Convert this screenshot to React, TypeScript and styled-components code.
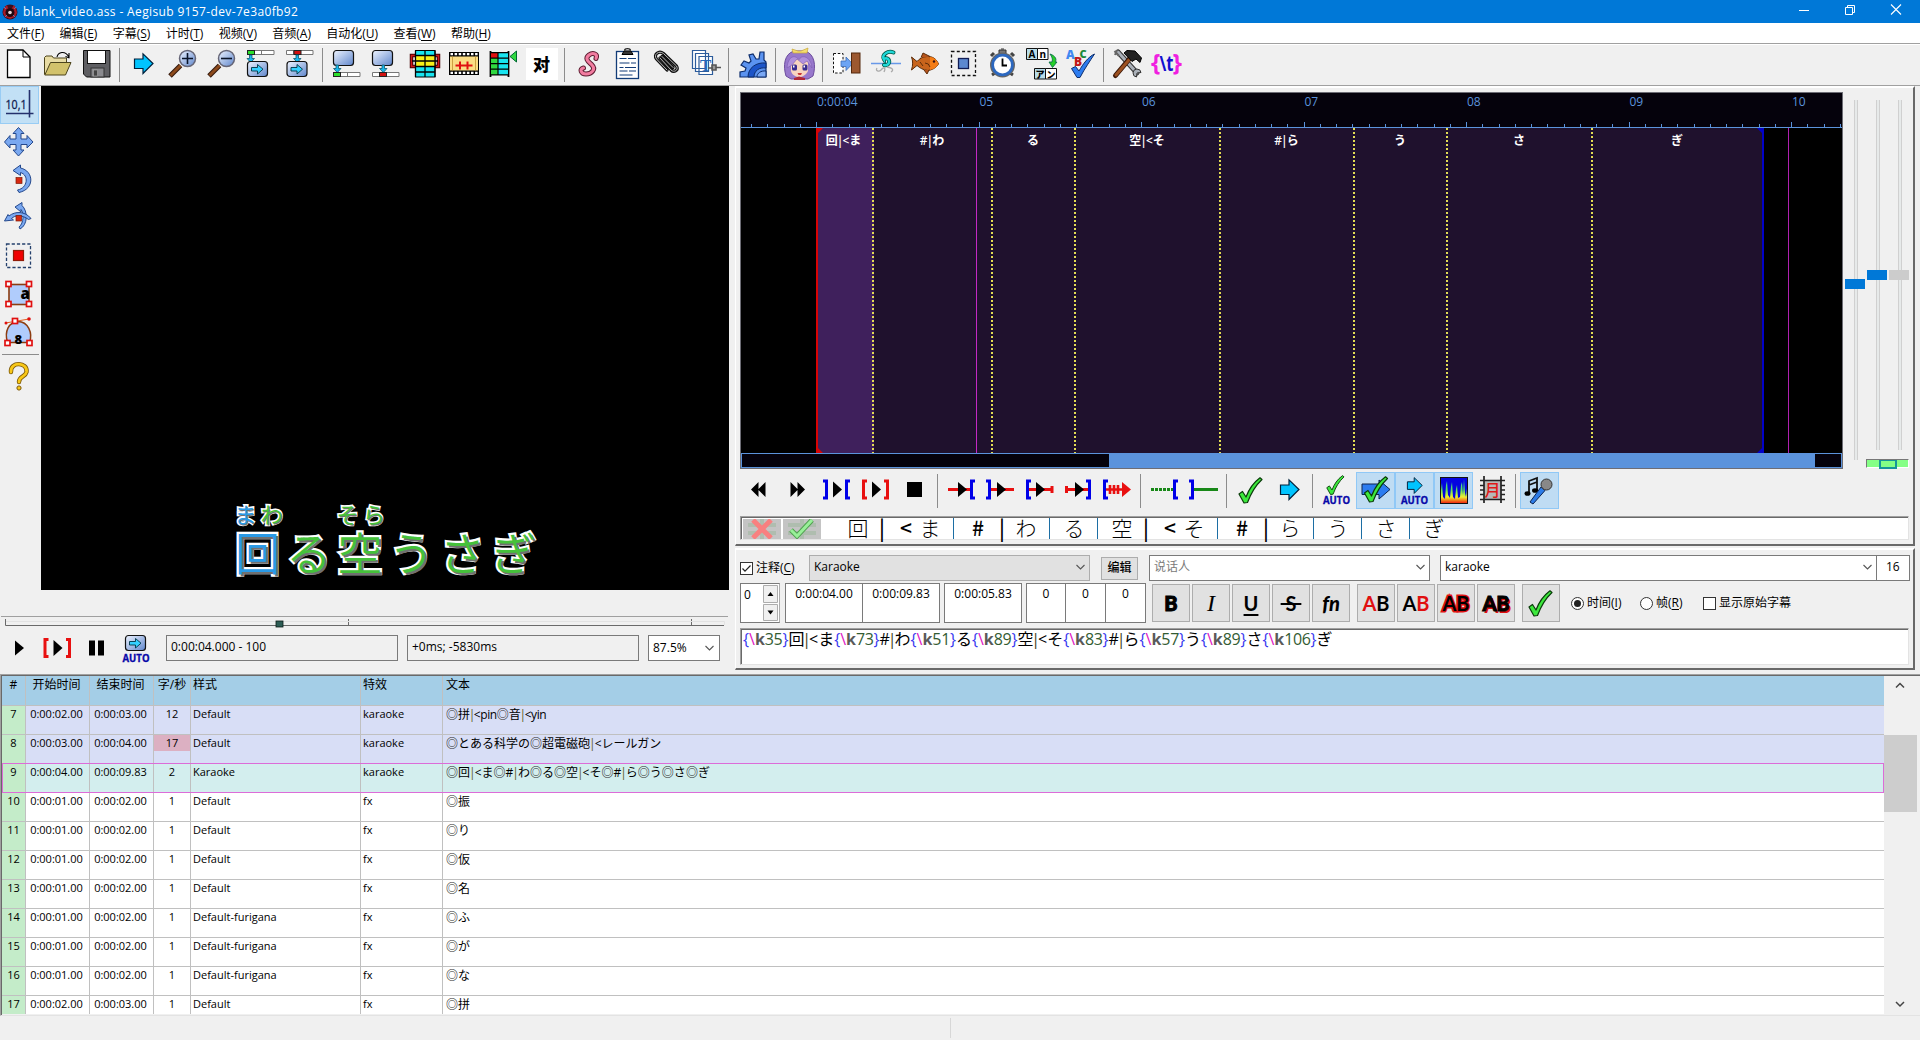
import React from "react";
import styled, { createGlobalStyle, css } from "styled-components";

const UI = `"Open Sans", "Noto Sans CJK SC", sans-serif`;
const JP = `"Open Sans", "Noto Sans CJK JP", sans-serif`;

const Global = createGlobalStyle`
  * { box-sizing: border-box; }
  html, body { margin: 0; padding: 0; background: #f0f0f0; overflow: hidden; }
  body { font: 12px/16px ${UI}; color: #000; }
`;

/* ---------- window chrome ---------- */

const Window = styled.div`
  width: 1920px;
  height: 1040px;
  display: flex;
  flex-direction: column;
  overflow: hidden;
  background: #f0f0f0;
  white-space: pre;
`;

const TitleBar = styled.header`
  height: 23px;
  flex: none;
  display: flex;
  align-items: center;
  background: #0078d7;
  color: #fff;
  padding-left: 2px;
`;

const Title = styled.h1`
  margin: 0 0 0 5px;
  flex: 1;
  font: 400 12px/22px ${UI};
  letter-spacing: 0.36px;
`;

const WindowButtons = styled.div`
  display: flex;
  align-self: flex-start;
  margin: -1px 1px 0 0;
  svg { width: 46px; height: 22px; display: block; }
`;

const MenuBar = styled.nav`
  height: 20px;
  flex: none;
  display: flex;
  align-items: center;
  gap: 15.3px;
  padding-left: 7px;
  background: #fff;
  line-height: 19px;
`;

const Key = styled.span`
  text-decoration: underline;
  text-underline-offset: 2px;
`;

const Toolbar = styled.div`
  height: 43px;
  flex: none;
  display: flex;
  align-items: flex-start;
  border-top: 1px solid #a0a0a0;
  border-bottom: 1px solid #a0a0a0;
  box-shadow: inset 0 1px #fff;
  padding-top: 4px;
`;

const ToolButton = styled.button<{ $on?: boolean; $first?: boolean }>`
  width: 39px;
  height: 37px;
  flex: none;
  margin: 0 0 0 ${(p) => (p.$first ? "-1px" : "0")};
  padding: 0 0 0 3px;
  border: 0;
  background: none;
  display: flex;
  align-items: flex-start;
  svg { width: 33px; height: 32px; display: block; overflow: visible; flex: none; }
  ${(p) => p.$on && css`
    background: #bfdcf3;
    box-shadow: inset 0 0 0 1px #90c8f6;
  `}
`;

const Separator = styled.i`
  width: 8px;
  height: 34px;
  flex: none;
  background: linear-gradient(#8c8c8c, #8c8c8c) 3px 0 / 1px 100% no-repeat;
`;

/* ---------- main areas ---------- */

const Main = styled.main`
  height: 588px;
  flex: none;
  display: flex;
`;

const VideoSide = styled.section`
  width: 735px;
  flex: none;
  display: flex;
  flex-direction: column;
`;

const VideoRow = styled.div`
  height: 504px;
  display: flex;
`;

const VisualTools = styled.div`
  width: 41px;
  flex: none;
  display: flex;
  flex-direction: column;
`;

const VisualButton = styled.button<{ $on?: boolean }>`
  width: 39px;
  height: 38px;
  padding: 1px 0 4px 2px;
  border: 0;
  background: none;
  svg { width: 33px; height: 33px; display: block; overflow: visible; }
  ${(p) => p.$on && css`
    background: #c2e0f5;
    box-shadow: inset 0 0 0 1px #98ccf4;
  `}
`;

const VisualRule = styled.i`
  height: 1px;
  margin: 2px 0 4px 2px;
  width: 37px;
  background: #8c8c8c;
`;

const Video = styled.div`
  width: 688px;
  background: #000;
  display: flex;
  flex-direction: column;
  justify-content: flex-end;
  padding: 0 0 9px 191px;
  font-family: "Noto Sans CJK JP", sans-serif;
`;

const Lyric = styled.div<{ $ruby?: boolean }>`
  display: grid;
  grid-template-columns: repeat(6, 51.2px);
  height: ${(p) => (p.$ruby ? 24 : 56)}px;
  line-height: ${(p) => (p.$ruby ? 24 : 54)}px;
  font-size: ${(p) => (p.$ruby ? 22 : 45)}px;
  font-weight: ${(p) => (p.$ruby ? 400 : 350)};
`;

const Glyph = styled.span<{ $sung?: boolean; $ruby?: boolean }>`
  color: ${(p) => (p.$sung ? "#2a9ae6" : "#45c13a")};
  -webkit-text-stroke: ${(p) => (p.$ruby ? 3.2 : 4.4)}px #fff;
  paint-order: stroke fill;
  text-shadow: 2px 2px 0 #707070;
  text-align: center;
  display: inline-block;
  ${(p) => p.$ruby && css`width: 26.5px; text-shadow: 1px 1px 0 #707070;`}
`;

const RubyPair = styled.span`
  display: flex;
  width: 54px;
`;

const SeekArea = styled.div`
  height: 40px;
  padding: 26px 6px 0 1px;
  svg { display: block; }
`;

const VideoControls = styled.div`
  display: flex;
  align-items: center;
  height: 44px;
  padding: 0 0 8px 4px;
`;

const VideoButton = styled.button<{ $w: number }>`
  width: ${(p) => p.$w}px;
  height: 32px;
  padding: 0;
  border: 0;
  background: none;
  flex: none;
  svg { display: block; width: 32px; height: 32px; overflow: visible; }
`;

const ReadOnly = styled.div<{ $w: number }>`
  width: ${(p) => p.$w}px;
  height: 26px;
  flex: none;
  border: 1px solid #7a7a7a;
  margin-right: 9px;
  padding: 0 4px;
  line-height: 22px;
`;

const Zoom = styled(ReadOnly)`
  background: #fff;
  display: flex;
  justify-content: space-between;
  align-items: center;
  margin: 0;
`;

/* ---------- audio panel ---------- */

const Panels = styled.section`
  width: 1180px;
  display: flex;
  flex-direction: column;
`;

const AudioPanel = styled.div`
  height: 460px;
  border-right: 2px solid #696969;
  border-bottom: 2px solid #696969;
  border-left: 1px solid #fff;
  border-top: 2px solid #fff;
  padding: 4px 3px 0 4px;
  display: flex;
  flex-direction: column;
`;

const DisplayRow = styled.div`
  display: flex;
  height: 377px;
`;

const AudioDisplay = styled.div`
  width: 1103px;
  border: 1px solid #6d6d75;
  background: #000;
  display: flex;
  flex-direction: column;
`;

const Ruler = styled.div`
  height: 35px;
  background: #05020c;
  svg { display: block; }
`;

const Track = styled.div`
  height: 325px;
  display: flex;
  padding-left: 75px;
  position: relative;
`;

const Syllable = styled.div<{ $w: number; $active?: boolean; $last?: boolean }>`
  width: ${(p) => p.$w}px;
  flex: none;
  padding: 6px 3px 0 0;
  text-align: center;
  color: #fff;
  font: 600 12px/14px ${JP};
  background:
    ${(p) => (p.$last
      ? "linear-gradient(#0202c8,#0202c8)"
      : "repeating-linear-gradient(#e2dc54 0 2px, transparent 2px 4px)")}
      right 0 top 0 / 2px 100% no-repeat,
    ${(p) => (p.$active ? "#3f205c" : "#1f112d")};
`;

const Marker = styled.i<{ $x: number; $c: string; $w?: number }>`
  position: absolute;
  top: 0;
  bottom: 0;
  left: ${(p) => p.$x}px;
  width: ${(p) => p.$w ?? 1}px;
  background: ${(p) => p.$c};
`;

const Feet = styled.svg`
  position: absolute;
  top: 0;
  left: 0;
`;

const AudioScroll = styled.div`
  height: 15px;
  border: 1px solid #5b93dc;
  background: #05020c;
  padding: 0 26px 0 367px;
  &::before { content: ""; display: block; height: 100%; background: #5b93dc; }
`;

const Sliders = styled.div`
  display: grid;
  grid-template-columns: repeat(3, 22px);
  padding-left: 2px;
  align-content: start;
  height: 377px;
`;

const Slider = styled.div<{ $h: number; $top: number; $off?: boolean }>`
  height: ${(p) => p.$h}px;
  width: 20px;
  margin-top: 8px;
  background: linear-gradient(90deg, #d0d0d0 1px, #e7eaea 1px 3px, #d0d0d0 3px) 9px 0 / 4px 100% no-repeat;
  padding-top: ${(p) => p.$top}px;
  &::before {
    content: "";
    display: block;
    height: 10px;
    background: ${(p) => (p.$off ? "#cccccc" : "#0078d7")};
  }
`;

const LinkToggle = styled.div`
  grid-column: 2 / 4;
  width: 43px;
  height: 9px;
  margin: -1px 0 0 -1px;
  background: #85ff86;
  border: 1px solid;
  border-color: #777 #fff #fff #777;
  display: flex;
  justify-content: center;
  &::before { content: ""; width: 14px; height: 6px; border: 2px solid #16959b; border-top-width: 1px; }
`;

const AudioToolbar = styled.div`
  display: flex;
  height: 47px;
  padding: 3px 0 0 0;
  margin-left: -1px;
  ${ToolButton} { padding-top: 1px; }
  ${Separator} { margin-top: 2px; }
`;

const KaraokeStrip = styled.div`
  height: 24px;
  width: 1169px;
  display: flex;
  background: #fff;
  border: 1px solid;
  border-color: #a0a0a0 #e3e3e3 #e3e3e3 #a0a0a0;
  box-shadow: inset 1px 1px #696969;
  padding-left: 2px;
  padding-top: 1px;
`;

const StripButton = styled.span`
  width: 38px;
  height: 20px;
  margin-top: 1px;
  margin-right: 2px;
  background: #c4c4c4;
  overflow: hidden;
  svg { display: block; }
`;

const StripSyllable = styled.span<{ $last?: boolean }>`
  display: flex;
  height: 21px;
  padding: 0 ${(p) => (p.$last ? 12 : 11)}px 0 12px;
  border-right: ${(p) => (p.$last ? 0 : 1)}px solid #1c6ea4;
  font: 300 21px/19px "Noto Sans CJK JP", sans-serif;
`;

const StripGap = styled.i`
  width: 11px;
`;

const Ch = styled.b<{ $latin?: boolean }>`
  width: 24px;
  font-weight: ${(p) => (p.$latin ? 500 : "inherit")};
  text-align: center;
  line-height: 18px;
`;

/* ---------- edit panel ---------- */

const EditPanel = styled.div`
  height: 122px;
  margin-top: 2px;
  border-right: 2px solid #696969;
  border-bottom: 2px solid #696969;
  border-left: 1px solid #fff;
  border-top: 2px solid #fff;
  padding: 5px 3px 0 4px;
`;

const EditRow = styled.div<{ $h: number }>`
  height: ${(p) => p.$h}px;
  display: flex;
  align-items: center;
`;

const Check = styled.label<{ $l?: number; $w?: number }>`
  display: flex;
  flex: none;
  width: ${(p) => (p.$w ? `${p.$w}px` : "auto")};
  align-items: center;
  gap: 3px;
  margin-left: ${(p) => p.$l ?? 0}px;
  svg { width: 13px; height: 13px; flex: none; }
`;

const Field = styled.div<{ $w: number; $l?: number; $bg?: string; $mute?: boolean; $pad?: number }>`
  width: ${(p) => p.$w}px;
  height: 26px;
  margin-left: ${(p) => p.$l ?? 0}px;
  flex: none;
  background: ${(p) => p.$bg ?? "#fff"};
  border: 1px solid ${(p) => (p.$bg ? "#adadad" : "#7a7a7a")};
  color: ${(p) => (p.$mute ? "#7a7a7a" : "#000")};
  display: flex;
  justify-content: space-between;
  align-items: center;
  padding: 0 3px 2px ${(p) => p.$pad ?? 4}px;
`;

const Plain = styled.button`
  width: 37px;
  height: 23px;
  margin: 0 0 0 11px;
  padding: 0;
  background: #e1e1e1;
  border: 1px solid #adadad;
  font: 500 12px/20px ${UI};
`;

const TimeBox = styled.div<{ $w: number; $l?: number }>`
  width: ${(p) => p.$w}px;
  margin: 2px 0 0 ${(p) => p.$l ?? -1}px;
  height: 40px;
  flex: none;
  background: #fff;
  border: 1px solid #7a7a7a;
  text-align: center;
  padding-top: 2px;
  align-self: flex-start;
`;

const Spin = styled(TimeBox)`
  display: flex;
  justify-content: space-between;
  padding: 1px 0 1px 3px;
  border-right-color: #adadad;
  line-height: 20px;
  svg { display: block; }
`;

const StyleButton = styled.button<{ $l?: number }>`
  width: 38px;
  height: 38px;
  margin: 0 0 0 ${(p) => p.$l ?? 2}px;
  padding: 0;
  flex: none;
  background: #e1e1e1;
  border: 1px solid #adadad;
  font: 700 20px/33px Lato, sans-serif;
  svg { display: block; width: 36px; height: 36px; }
`;

const Letter = styled.span<{ $c?: string; $glow?: boolean; $deco?: string; $it?: boolean; $fw?: number; $serif?: boolean }>`
  color: ${(p) => p.$c ?? "#000"};
  text-decoration: ${(p) => p.$deco ?? "none"};
  text-decoration-thickness: 2px;
  text-underline-offset: 3px;
  font-style: ${(p) => (p.$it ? "italic" : "normal")};
  font-weight: ${(p) => p.$fw ?? 700};
  ${(p) => p.$serif && css`font-family: "Liberation Serif", serif; font-size: 24px;`}
  ${(p) => p.$glow && css`-webkit-text-stroke: 3px #e01010; paint-order: stroke fill;`}
`;

const Heavy = styled(Letter)`
  -webkit-text-stroke: 1px #000;
`;

const Shadowed = styled(Letter)`
  text-shadow: 2px 2px 0 #e01010;
  -webkit-text-stroke: 1px #000;
`;

const TextArea = styled.div`
  margin-top: 3px;
  width: 1169px;
  height: 37px;
  background: #fff;
  border: 1px solid;
  border-color: #a0a0a0 #e3e3e3 #e3e3e3 #a0a0a0;
  box-shadow: inset 1px 1px #696969;
  padding: 0 0 0 2px;
  font: 16px/21px ${JP};
`;

const Tok = styled.span<{ $k: "brace" | "slash" | "tag" | "num" | "txt" }>`
  color: ${(p) => ({ brace: "#3838f0", slash: "#e014c4", tag: "#5a5a5a", num: "#335c33", txt: "#000" })[p.$k]};
  font-weight: ${(p) => (p.$k === "tag" ? 700 : 400)};
  letter-spacing: ${(p) => (p.$k === "num" ? -0.35 : 0)}px;
`;

const Pipe = styled.span<{ $by: number; $c?: string }>`
  margin: 0 -${(p) => p.$by}px;
  color: ${(p) => p.$c ?? "inherit"};
`;

/* ---------- subtitle grid ---------- */

const GridArea = styled.section`
  height: 342px;
  flex: none;
  display: flex;
  border-top: 1px solid #a0a0a0;
  border-left: 1px solid #a0a0a0;
  border-bottom: 1px solid #e3e3e3;
  box-shadow: inset 1px 1px #696969;
  padding: 1px 3px 1px 1px;
  overflow: hidden;
`;

const Table = styled.div`
  flex: 1;
  background: #fff;
  overflow: hidden;
`;

const Row = styled.div<{ $bg: string; $head?: boolean; $current?: boolean }>`
  display: grid;
  grid-template-columns: 24px 64px 64px 37px 170px 82px 1fr;
  height: 29px;
  background: ${(p) => p.$bg};
  border-bottom: 1px solid #c0c0c0;
  font: 11px/15px "Open Sans", "Noto Sans CJK JP", sans-serif;
  ${(p) => p.$head && css`height: 30px; font: 12px/18px ${UI};`}
  ${(p) => p.$current && css`
    outline: 1px solid #dc6cd8;
    outline-offset: -1px;
    height: 30px;
    margin-top: -1px;
    padding-top: 1px;
    border-bottom-color: #dc6cd8;
    position: relative;
  `}
`;

const Cell = styled.div<{ $center?: boolean; $bg?: string; $time?: boolean }>`
  border-right: 1px solid #c0c0c0;
  padding: 0 ${(p) => (p.$time ? 2 : 0)}px 0 ${(p) => (p.$center ? 0 : 2)}px;
  text-align: ${(p) => (p.$center ? "center" : "left")};
  background: ${(p) => p.$bg ?? "none"};
  overflow: hidden;
  &:last-child { border-right: 0; padding-left: 3px; }
`;

const TextCell = styled(Cell)<{ $tight?: boolean }>`
  font-size: 12px;
  letter-spacing: ${(p) => (p.$tight ? -0.4 : 0)}px;
`;

const Rate = styled.span<{ $hot?: boolean }>`
  display: block;
  height: 16px;
  background: ${(p) => (p.$hot ? "#dcb0c2" : "none")};
`;

const Ring = styled.span`
  color: #2c2c2c;
  letter-spacing: 0;
  font-family: "Noto Sans CJK JP", sans-serif;
  font-weight: 700;
`;

const Scrollbar = styled.div`
  width: 33px;
  flex: none;
  display: flex;
  flex-direction: column;
  background: #f0f0f0;
  svg { display: block; }
`;

const Thumb = styled.i`
  height: 77px;
  background: #cdcdcd;
  margin: 39px 0 auto;
`;

const StatusBar = styled.footer`
  flex: 1;
  background: linear-gradient(#d7d7d7, #d7d7d7) 950px 2px / 1px 20px no-repeat #f0f0f0;
`;

/* ---------- icon pieces ---------- */

const Svg = ({ children, box = "0 0 33 32" }: { children: React.ReactNode; box?: string }) => (
  <svg viewBox={box}>{children}</svg>
);

const Defs = () => (
  <svg width="0" height="0" style={{ position: "absolute" }}>
    <defs>
      <linearGradient id="pane" x1="0" y1="0" x2="1" y2="1">
        <stop offset="0" stopColor="#eef4ff" />
        <stop offset="1" stopColor="#5f86cc" />
      </linearGradient>
      <linearGradient id="spec" x1="0" y1="0" x2="0" y2="1">
        <stop offset="0" stopColor="#38c8c0" />
        <stop offset=".45" stopColor="#58e858" />
        <stop offset=".75" stopColor="#f0f030" />
        <stop offset="1" stopColor="#f02810" />
      </linearGradient>
    </defs>
  </svg>
);

const Tri = ({ x, y = 16, h = 9, w = 9, c = "#000" }: { x: number; y?: number; h?: number; w?: number; c?: string }) => (
  <path d={`M${x} ${y - h}L${x + w} ${y}L${x} ${y + h}Z`} fill={c} />
);
const BrL = ({ x, c = "#0000e8" }: { x: number; c?: string }) => (
  <path d={`M${x + 5} 8H${x + 1.5}V25H${x + 5}`} fill="none" stroke={c} strokeWidth="3" />
);
const BrR = ({ x, c = "#0000e8" }: { x: number; c?: string }) => (
  <path d={`M${x} 8H${x + 3.5}V25H${x}`} fill="none" stroke={c} strokeWidth="3" />
);
const Arrow = ({ x = 7, y = 5, s = 1 }: { x?: number; y?: number; s?: number }) => (
  <path transform={`translate(${x} ${y}) scale(${s})`} d="M.5 6H9V.8L19 10.5L9 20.5V15.500H.5Z" fill="#00c4ff" stroke="#00203c" strokeWidth="1.200" />
);
const Tick = ({ x = 0, y = 0, s = 1 }: { x?: number; y?: number; s?: number }) => (
  <path transform={`translate(${x} ${y}) scale(${s})`} d="M1 17L4.500 14.500L8 20C11 12 15 6 22 .8L24 2.500C17 9 13 16 9.500 25.500L6 26Z" fill="#3ce83c" stroke="#0a3c0a" strokeWidth="1.200" strokeLinejoin="round" />
);
const Auto = ({ x = 3, y = 30 }: { x?: number; y?: number }) => (
  <text x={x} y={y} fontFamily="Open Sans" fontWeight="700" fontSize="10.500" fill="#0808a8" stroke="#0808a8" strokeWidth=".3" textLength="27" lengthAdjust="spacingAndGlyphs">AUTO</text>
);
const Down = ({ x, y }: { x: number; y: number }) => (
  <path d={`M${x - 1} ${y}h2.500v3.500h2.500l-3.700 4l-3.800-4h2.500z`} fill="#18b8ec" stroke="#0c5870" strokeWidth=".8" />
);
const Bar = ({ y, at, c }: { y: number; at: number; c: string }) => (
  <g strokeWidth="1">
    <path d={`M3.500 ${y}H30V${y + 4}H3.500ZM${10.5} ${y}v4M17.500 ${y}v4`} fill="#fff" stroke="#777" />
    <rect x={at} y={y} width="7" height="4" fill={c} stroke="#222" />
  </g>
);
const Pane = ({ x, y, arrow }: { x: number; y: number; arrow?: boolean }) => (
  <g>
    <rect x={x} y={y} width="20" height="15" rx="3" fill="url(#pane)" stroke="#111" strokeWidth="1.200" />
    {arrow && <path d={`M${x + 4} ${y + 6}h6v-3l5.500 4.700l-5.500 4.800v-3h-6z`} fill="#34d0ff" stroke="#034" strokeWidth=".9" />}
  </g>
);
const Lens = ({ plus }: { plus?: boolean }) => (
  <Svg>
    <path d="M4 28L14.500 17.500" stroke="#30160a" strokeWidth="5" />
    <path d="M4.500 27.500L14.500 17.500" stroke="#8c4a1c" strokeWidth="3" />
    <circle cx="21.500" cy="10.500" r="8" fill="url(#pane)" stroke="#667" strokeWidth="1.500" />
    <path d={plus ? "M16 10.500h11M21.500 5v11" : "M16 10.500h11"} stroke="#0a1428" strokeWidth="1.600" />
  </Svg>
);
const Cog = "#5b93f0";

const mainIcons: React.ReactNode[] = [
  <Svg><path d="M5.500 2H21L28 9V29.500H5.500Z" fill="#fff" stroke="#000" strokeWidth="1.300" /><path d="M21 2V9H28" fill="none" stroke="#000" /></Svg>,
  <Svg>
    <path d="M3.500 26.500V9.500L5 8H11L12.500 10H25.500V15" fill="#e8dca4" stroke="#4c441c" />
    <path d="M3.800 27L9.500 14.500H30L24.500 27Z" fill="#d2c26c" stroke="#4c441c" />
    <path d="M16 9C17 4 24 2 28 9M28 9.500V5M28.500 10L24.500 8.500" fill="none" stroke="#000" strokeWidth="1.100" />
  </Svg>,
  <Svg>
    <path d="M3.500 2.500H30V29H6.500L3.500 26Z" fill="#5e5e62" stroke="#111" />
    <rect x="7.500" y="2.500" width="18" height="13" fill="#fff" stroke="#111" />
    <rect x="11" y="20" width="13" height="9" fill="#8a8a8e" stroke="#333" /><rect x="13.500" y="22" width="4" height="6" fill="#444" stroke="#aaa" strokeWidth=".6" />
  </Svg>,
  null,
  <Svg><Arrow /></Svg>,
  <Lens plus />,
  <Lens />,
  <Svg><Bar y={2.5} at={3.5} c="#2ce02c" /><Down x={6.5} y={7} /><Pane x={3.5} y={13.5} arrow /></Svg>,
  <Svg><Bar y={2.5} at={11} c="#d01010" /><Down x={14} y={7} /><Pane x={4} y={13.5} arrow /></Svg>,
  null,
  <Svg><Pane x={3.5} y={2.5} /><Down x={7} y={17} /><Bar y={24.5} at={3.5} c="#2ce02c" /></Svg>,
  <Svg><Pane x={3.5} y={2.5} /><Down x={14} y={17} /><Bar y={24.5} at={10.5} c="#d01010" /></Svg>,
  <Svg>
    <path d="M8 7.500H3.500V18.500H8M26 7.500H30.500V18.500H26" fill="none" stroke="#400" strokeWidth="3.500" /><path d="M8 7.500H3.500V18.500H8M26 7.500H30.500V18.500H26" fill="none" stroke="#d01818" strokeWidth="1.500" />
    <rect x="7.500" y="2.500" width="19.500" height="26.500" fill="#18e4f0" stroke="#000" />
    <rect x="7.500" y="7.500" width="19.500" height="11" fill="#f8f018" />
    <path d="M7.500 7.500h19.500M7.500 13h19.500M7.500 18.500h19.500M7.500 24h19.500M17 2.500V29M4 13h3M27 13h3M7.500 2.500v26.500M27 2.500v26.500" stroke="#000" strokeWidth="1.300" />
  </Svg>,
  <Svg>
    <rect x="2" y="4" width="30" height="23" fill="#000" />
    <rect x="3" y="8.500" width="28" height="14" fill="#fadc84" /><path d="M5.500 8.500v14M28.500 8.500v14" stroke="#c09030" strokeWidth=".8" />
    <path d="M3.500 6.200H32M3.500 24.900H32" stroke="#fff" strokeWidth="2.200" strokeDasharray="2.500 1.600" />
    <path d="M8.500 17.500h17M13 13.500v8M20.500 13.500v8" stroke="#e01010" strokeWidth="2" />
  </Svg>,
  <Svg>
    <path d="M4.500 3V29M22.500 3V29" stroke="#000" strokeWidth="1.800" />
    <rect x="5" y="5" width="7" height="22" fill="#30d840" /><rect x="12" y="5" width="10" height="22" fill="#18e4f0" /><rect x="5" y="5" width="7" height="5" fill="#e01010" />
    <path d="M4.500 4.700h18M4.500 10.200h18M4.500 15.700h18M4.500 21.200h18M4.500 26.800h18M12 5v22" stroke="#000" strokeWidth="1.200" />
    <path d="M30.500 3V14L24 8.500Z" fill="#30d840" stroke="#063" />
  </Svg>,
  <Svg><rect x="1" y="0" width="32" height="32" fill="#fff" /><text x="8" y="22.500" fontFamily="Noto Sans CJK SC" fontWeight="900" fontSize="17">对</text></Svg>,
  null,
  <Svg>
    <path d="M24 10.500C26 6 21 4 17 7C12 11 17 14 20 17C24 21 20 26 14 26C9 26 7 21 11.500 20" fill="none" stroke="#5c1c30" strokeWidth="5" strokeLinecap="round" />
    <path d="M24 10.500C26 6 21 4 17 7C12 11 17 14 20 17C24 21 20 26 14 26C9 26 7 21 11.500 20" fill="none" stroke="#f27ca0" strokeWidth="3" strokeLinecap="round" />
  </Svg>,
  <Svg>
    <rect x="5.500" y="3.500" width="22" height="27" fill="#fff" stroke="#123c78" strokeWidth="1.300" />
    <path d="M11 6.500L13 3H20L22 6.500Z" fill="#333" stroke="#000" /><path d="M13.500 2.500C14 0 19 0 19.500 2.500" stroke="#222" fill="none" strokeWidth="1.300" />
    <path d="M8.500 10.500h7M17 10.500h8M8.500 15h10M20 15h5M8.500 19.500h4M14 19.500h11M8.500 23h8M18 23h7M8.500 27h13" stroke="#123c78" strokeWidth="1.200" />
  </Svg>,
  <Svg>
    <path d="M10 10L21 22C24 25 29 22 26.500 18L13.500 5.500C9 2 3 6.500 6.500 11L17 22M12 8.500L23 19.500" fill="none" stroke="#111" strokeWidth="3.200" strokeLinecap="round" />
    <path d="M10 10L21 22C24 25 29 22 26.500 18L13.500 5.500C9 2 3 6.500 6.500 11L17 22M12 8.500L23 19.500" fill="none" stroke="#bbb" strokeWidth="1" strokeLinecap="round" />
  </Svg>,
  <Svg>
    <path d="M3.500 2.500h13v18h-13zM6.500 5.500h13v18h-13zM10 8.500h13.500v18H10z" fill="#fff" stroke="#2c5c9c" strokeWidth="1.200" />
    <text x="11" y="23" fontFamily="Liberation Serif" fontWeight="700" fontSize="17" fill="#2868b8">T</text>
    <path d="M19 20h5M23 17h4v5h-4zM27 19.500h5" stroke="#555" strokeWidth="1.600" fill="#999" />
  </Svg>,
  null,
  <Svg>
    <path d="M4 29V24L9 23L10 20L5 17L8 13L13 15L15 13L13 7L17 6L20 11L23 11L24 4L28 4L28 12L30 14V29Z" fill={Cog} stroke="#0c2c6c" strokeWidth="1.200" />
    <path d="M12 29C12 20 20 14 30 15V20C23 19 18 23 18 29Z" fill="#1c54c8" stroke="#0c2c6c" /><path d="M21 29C21 25 25 22.500 30 23V29Z" fill="#7aa8f4" stroke="#0c2c6c" />
  </Svg>,
  null,
  <Svg>
    <path d="M3 28C0 18 1 6 11 3H22C32 6 33 18 30 28L25 31H8Z" fill="#9878cc" stroke="#6c4c9c" />
    <path d="M8 14C10 10 24 10 25 14V23C23 27 19 29 16.500 29C13 29 9 27 8 23Z" fill="#f8d4c0" />
    <path d="M4 20C5 8 12 6 16 12C18 6 28 8 29 20L24 13L20 16L14 11L9 17Z" fill="#b090dc" stroke="#7c5cb0" strokeWidth=".6" />
    <rect x="9" y="16.500" width="5" height="6" rx="1.500" fill="#382c90" /><rect x="19.500" y="16.500" width="5" height="6" rx="1.500" fill="#382c90" />
    <path d="M10 17.500h1.500v2h-1.500zM20.500 17.500h1.500v2h-1.500z" fill="#fff" />
    <path d="M14.500 25h4.500l-1 2h-2.500z" fill="#c83838" /><path d="M11 30L16 28.500L22 30V32H11Z" fill="#b02838" />
    <path d="M9 1L15 3L18 3L25 0L24 5L17 5L10 5Z" fill="#f4dc70" stroke="#c8a838" strokeWidth=".7" />
  </Svg>,
  null,
  <Svg>
    <rect x="3.500" y="5.500" width="9.500" height="19.500" fill="#fff" stroke="#111" strokeDasharray="2.500 1.800" />
    <path d="M11 13h5v-4l6.500 6.800L16 22.500v-4h-5z" fill="#6ca4f4" stroke="#3c6cb8" strokeWidth=".8" />
    <rect x="21.500" y="5" width="8.500" height="20" fill="#9c5830" stroke="#54280c" />
  </Svg>,
  <Svg>
    <path d="M2 15.500H32" stroke="#6898e8" strokeWidth="1.500" />
    <path d="M15 17C18 18 21 15.500 20 12.500C19 9.500 15 10 15 11.500C12 7 19 2 24.500 4.500" fill="none" stroke="#054" strokeWidth="4" strokeLinecap="round" />
    <path d="M15 17C18 18 21 15.500 20 12.500C19 9.500 15 10 15 11.500C12 7 19 2 24.500 4.500" fill="none" stroke="#20d8d8" strokeWidth="2.400" strokeLinecap="round" />
    <path d="M8 20C6 23 10 24 12 22C15 18 17 20 15 24M18 19C24 20 25 22 22 24" fill="none" stroke="#aaa" strokeWidth="1.300" />
  </Svg>,
  <Svg>
    <path d="M3.500 9L9 13.500C13 9 17 8.500 21 8.500C26 9 29 12 30.500 16C28 20 24 22 20 22.500C15 22 12 20 9 17.500L3.500 22C5 17 5 13 3.500 9Z" fill="#c8641c" stroke="#5c2c08" />
    <path d="M13 9.500L15 5L22 8.500M16 22L19 26L21 22" fill="#b8541c" stroke="#5c2c08" /><path d="M22 9C26 9 29 12 30.500 16C28 20 25 21 22 22Z" fill="#f47c14" />
    <circle cx="26" cy="13.500" r="1.200" fill="#311" /><path d="M17 15q4 0 5 4M12 14l3 4" stroke="#5c2c08" fill="none" />
  </Svg>,
  <Svg><rect x="4.500" y="3.500" width="24" height="24" fill="none" stroke="#111" strokeWidth="1.300" strokeDasharray="3 2.300" /><rect x="11.500" y="10.500" width="10" height="10" fill="#5c88d0" stroke="#111c54" strokeWidth="1.300" /></Svg>,
  <Svg>
    <path d="M13 2h7v4h-7zM15 1h3" fill="#777" stroke="#333" /><path d="M5 8l3-3M28 8l-3-3M6 27l3-2M27 27l-3-2" stroke="#444" strokeWidth="3" />
    <circle cx="16.500" cy="17" r="12.500" fill="#666" /><circle cx="16.500" cy="17" r="11.200" fill="#2c68c0" /><circle cx="16.500" cy="17" r="8.500" fill="#fff" /><path d="M16.500 10.500V17.500H21" fill="none" stroke="#000" strokeWidth="1.800" />
  </Svg>,
  <Svg>
    <path d="M1.500.500h11v11h-11zM9.500 20.500h11v10.500h-11z" fill="#b8dce8" stroke="#111" /><path d="M12.500.500h10.500v11h-10.500zM20.500 20.500H31.500v10.500h-11z" fill="#fff" stroke="#111" />
    <g fontFamily="Open Sans" fontWeight="700" fontSize="10"><text x="3.500" y="10">A</text><text x="14.500" y="10">n</text></g>
    <g fontFamily="Noto Sans CJK JP" fontWeight="900" fontSize="9"><text x="10.500" y="29.500">ア</text><text x="21.500" y="29.500">ン</text></g>
    <path d="M25 6C31 8 32 12 30 14H32L27.500 19.500L24 14H27C28 11 27 9 25 6Z" fill="#28d028" stroke="#064" strokeWidth=".8" />
  </Svg>,
  <Svg>
    <g fontFamily="Open Sans" fontWeight="800"><text x="2" y="10.500" fontSize="12" fill="#4088f0">A</text><text x="10" y="17.500" fontSize="12" fill="#c01818">B</text><text x="15.500" y="9.500" fontSize="11" fill="#188838">C</text></g>
    <path d="M7.500 20.500L11.500 18.500L15 23C19 16 24 9 30.500 6C26 13 21 20 16 29.500H13Z" fill="#2c7cf0" stroke="#0c2c6c" />
  </Svg>,
  null,
  <Svg>
    <path d="M7 4L26 25" stroke="#333" strokeWidth="5" strokeLinecap="round" /><path d="M7 4L26 25" stroke="#aab0b8" strokeWidth="3" strokeLinecap="round" />
    <path d="M25.500 29A4 4 0 1 1 30 24.500L26 25Z" fill="#aab0b8" stroke="#333" /><path d="M3.500 3L8 8M6 2L4 7" stroke="#666" strokeWidth="2" />
    <path d="M4.500 27.500L20 9" stroke="#3c1808" strokeWidth="5" strokeLinecap="round" /><path d="M5 27L20 9.500" stroke="#9c5020" strokeWidth="3" strokeLinecap="round" />
    <path d="M13 5L16 2.500L24 3L30.500 10L29 14.500L25 11L21 13.500Z" fill="#222" stroke="#000" />
  </Svg>,
  <Svg>
    <g fontFamily="Open Sans" fontSize="24"><text x="1" y="23" fill="#f020e0" fontWeight="700">{"{"}</text><text x="9.500" y="22.500" fontSize="21" fill="#1010d0" fontWeight="700" textLength="14" lengthAdjust="spacingAndGlyphs">{"\\t"}</text><text x="22.500" y="23" fill="#f020e0" fontWeight="700">{"}"}</text></g>
  </Svg>,
];

const Node = ({ x, y }: { x: number; y: number }) => <rect x={x - 2.5} y={y - 2.5} width="5" height="5" fill="#fff" stroke="#e01010" strokeWidth="1.700" />;
const Frame = ({ children }: { children: React.ReactNode }) => <Svg box="0 0 33 33">{children}</Svg>;
const blue = { fill: "#7aa8f0", stroke: "#24488c", strokeWidth: 1 };

const visualIcons = [
  <Frame>
    <path d="M4 26.500H31.500M27.500 3V30.500" stroke="#24306c" strokeWidth="1.600" fill="none" />
    <text x="3.500" y="22" fontFamily="Open Sans" fontSize="12.500" fill="#101c50" stroke="#101c50" strokeWidth=".3" textLength="21" lengthAdjust="spacingAndGlyphs">10,1</text>
  </Frame>,
  <Frame><path {...blue} d="M16.500 2.500L22 8.500H19V14H25V10.500L31 17L25 23V19.500H19V25H22L16.500 31L11 25H14V19.500H8V23L2.500 17L8 10.500V14H14V8.500H11Z" /></Frame>,
  <Frame>
    <path {...blue} d="M11 7.500L18.500 2V5C32 8 33 26 17 29.500L15.500 27C26 25 27 12 18.500 9.500V12.500Z" />
    <rect x="14" y="14.500" width="6" height="6" fill="#d82810" stroke="#7c1c08" strokeWidth=".7" />
  </Frame>,
  <Frame>
    <path {...blue} d="M13 6L20 1.500V4.500C26 10 26 24 18 28L17 26C22 22 22 12 19 8.500V11Z" />
    <path {...blue} d="M2.500 20L6 13.500L7 15C13 10 23 10 29 17.500L26.500 18.500C20 13.500 13 14 9.500 17.500L11.500 19Z" />
    <rect x="14" y="14.500" width="5.500" height="5.500" fill="#d82810" stroke="#7c1c08" strokeWidth=".7" />
  </Frame>,
  <Frame><rect x="4.500" y="5" width="24" height="23.500" fill="none" stroke="#24406c" strokeWidth="1.300" strokeDasharray="3.200 2" /><rect x="11.500" y="11.500" width="10" height="10" fill="#f00000" stroke="#901c08" strokeWidth="1.200" /></Frame>,
  <Frame>
    <rect x="7" y="7.500" width="20" height="20" fill="#b0ccfc" stroke="#8c3c10" strokeWidth="1.600" /><text x="18.500" y="22" fontFamily="Open Sans" fontWeight="800" fontSize="15">a</text>
    <Node x={6.5} y={7} /><Node x={27} y={7} /><Node x={6.5} y={27} /><Node x={27} y={27} />
  </Frame>,
  <Frame>
    <path d="M5.500 27.500C2 16 7 7 16 6.500C26 6.500 31 18 27.500 27.500Z" fill="#b0ccfc" stroke="#8c3c10" strokeWidth="1.500" /><text x="12.500" y="28.500" fontFamily="Open Sans" fontWeight="800" fontSize="13">8</text>
    <path d="M3.500 8L27 4" stroke="#e06020" /><circle cx="4" cy="8" r="1.500" fill="#e01010" /><circle cx="27" cy="4" r="1.800" fill="#e01010" />
    <Node x={13} y={6} /><Node x={5.5} y={28} /><Node x={27.5} y={28} />
  </Frame>,
  null,
  <Frame>
    <path d="M9 12C8 1 26 2 24.500 12C23.500 17 17 16 17 22" fill="none" stroke="#7c5808" strokeWidth="4.400" strokeLinecap="round" /><path d="M9 12C8 1 26 2 24.500 12C23.500 17 17 16 17 22" fill="none" stroke="#f8c818" strokeWidth="2.800" strokeLinecap="round" />
    <circle cx="17" cy="28" r="2.100" fill="#f8c818" stroke="#7c5808" />
  </Frame>,
];

const red = "#e81010";
const audioIcons: (React.ReactNode | null)[] = [
  <Svg><path d="M9 16.500L16.500 9V24ZM16 16.500L23.500 9V24Z" /></Svg>,
  <Svg><path d="M9.500 9L17 16.500L9.500 24ZM16.500 9L24 16.500L16.500 24Z" /></Svg>,
  <Svg><BrR x={3} /><Tri x={13} y={16.5} h={8} /><BrL x={25} /></Svg>,
  <Svg><BrL x={3} c={red} /><Tri x={13} y={16.5} h={8} /><BrR x={25} c={red} /></Svg>,
  <Svg><rect x="9" y="9" width="15" height="15" /></Svg>,
  null,
  <Svg><path d="M3 16.500H25" stroke={red} strokeWidth="3" /><Tri x={13} y={16.5} h={7.5} /><BrL x={25} /></Svg>,
  <Svg><path d="M7 16.500H30" stroke={red} strokeWidth="3" /><Tri x={13} y={16.5} h={7.5} /><BrR x={2} /></Svg>,
  <Svg><path d="M5 16.500H29M29 13V20" stroke={red} strokeWidth="3" /><Tri x={13} y={16.5} h={7.5} /><BrL x={3} /></Svg>,
  <Svg><path d="M5 16.500H26M4.500 13V20" stroke={red} strokeWidth="3" /><Tri x={13} y={16.5} h={7.5} /><BrR x={24} /></Svg>,
  <Svg><path d="M5 16.500H22M9 12V21M13 12V21M17 12V21" stroke={red} strokeWidth="2.600" /><Tri x={21} y={16.5} h={7.5} c={red} /><BrL x={2} /></Svg>,
  null,
  <Svg><path d="M3 16.500H25" stroke="#188818" strokeWidth="3" strokeDasharray="3 1" /><BrL x={25} /></Svg>,
  <Svg><path d="M7 16.500H31" stroke="#188818" strokeWidth="3" /><BrR x={2} /></Svg>,
  null,
  <Svg><Tick x={4} y={4} /></Svg>,
  <Svg><Arrow y={6} /></Svg>,
  null,
  <Svg><Tick x={6} y={2} s={0.75} /><Auto y={31} /></Svg>,
  <Svg><path d="M3 11H20V7L31 16.500L20 26V21.500H3Z" fill="#2c7cf0" stroke="#0c2450" /><Tick x={4.5} y={3} /></Svg>,
  <Svg><Arrow x={9} y={4} s={0.8} /><Auto y={31} /></Svg>,
  <Svg>
    <rect x="3.500" y="4.500" width="27" height="26" fill="#0404e0" stroke="#111" />
    <path d="M4 30V17L5 10L6 24L8 26L9 12L10 8L11 22L13 25L14 14L15 9L16 24L18 26L19 16L20 12L21 25L23 24L24 12L25 9L26 22L27 6L28 20L29 24L30 15V30Z" fill="url(#spec)" />
  </Svg>,
  <Svg>
    <rect x="8" y="7" width="17" height="20" fill="#b8b8b8" /><path d="M4 7.500H29M4 12.500H8M25 12.500H29M4 17H8M25 17H29M4 21.500H8M25 21.500H29M4 26.500H29M8 3V30M25 3V30" stroke="#222" strokeWidth="1.700" />
    <text x="8.500" y="22.500" fontFamily="Noto Sans CJK SC" fontSize="16" fontWeight="500" fill="#e01818">月</text>
  </Svg>,
  null,
  <Svg>
    <path d="M6 20V8L14 5V17M6 12L14 9" stroke="#111" fill="none" strokeWidth="1.800" /><ellipse cx="4.500" cy="20.500" rx="3" ry="2.300" /><ellipse cx="12" cy="17.500" rx="3" ry="2.300" />
    <path d="M7 29L18 14L22 17.500L10 31Z" fill="#2c7ce8" stroke="#0c2450" /><circle cx="23.500" cy="11.500" r="5.500" fill="#888" stroke="#333" />
  </Svg>,
];
const audioOn = new Set([19, 20, 21, 24]);

const Chevron = () => (
  <svg width="11" height="8" viewBox="0 0 11 8"><path d="M1.500 2L5.500 6L9.500 2" fill="none" stroke="#555" strokeWidth="1.100" /></svg>
);
const Box = ({ on }: { on?: boolean }) => (
  <svg viewBox="0 0 13 13"><rect x=".5" y=".5" width="12" height="12" fill="#fff" stroke="#333" />{on && <path d="M2.500 6.500L5 9.200L10.500 3.500" fill="none" stroke="#222" strokeWidth="1.200" />}</svg>
);
const Radio = ({ on }: { on?: boolean }) => (
  <svg viewBox="0 0 13 13"><circle cx="6.500" cy="6.500" r="6" fill="#fff" stroke="#333" />{on && <circle cx="6.500" cy="6.500" r="3.500" fill="#222" />}</svg>
);

/* ---------- data ---------- */

const menus: [string, string][] = [
  ["文件", "F"], ["编辑", "E"], ["字幕", "S"], ["计时", "T"], ["视频", "V"], ["音频", "A"], ["自动化", "U"], ["查看", "W"], ["帮助", "H"],
];

const syllables = [
  { t: "回|<ま", k: 35, w: 58 },
  { t: "#|わ", k: 73, w: 119 },
  { t: "る", k: 51, w: 83 },
  { t: "空|<そ", k: 89, w: 145 },
  { t: "#|ら", k: 83, w: 134 },
  { t: "う", k: 57, w: 93 },
  { t: "さ", k: 89, w: 145 },
  { t: "ぎ", k: 106, w: 171 },
];

type Line = [number, string, string, number, string, string, string];
const lines: Line[] = [
  [7, "0:00:02.00", "0:00:03.00", 12, "Default", "karaoke", "@拼|<pin@音|<yin"],
  [8, "0:00:03.00", "0:00:04.00", 17, "Default", "karaoke", "@とある科学の@超電磁砲|<レールガン"],
  [9, "0:00:04.00", "0:00:09.83", 2, "Karaoke", "karaoke", "@回|<ま@#|わ@る@空|<そ@#|ら@う@さ@ぎ"],
  [10, "0:00:01.00", "0:00:02.00", 1, "Default", "fx", "@振"],
  [11, "0:00:01.00", "0:00:02.00", 1, "Default", "fx", "@り"],
  [12, "0:00:01.00", "0:00:02.00", 1, "Default", "fx", "@仮"],
  [13, "0:00:01.00", "0:00:02.00", 1, "Default", "fx", "@名"],
  [14, "0:00:01.00", "0:00:02.00", 1, "Default-furigana", "fx", "@ふ"],
  [15, "0:00:01.00", "0:00:02.00", 1, "Default-furigana", "fx", "@が"],
  [16, "0:00:01.00", "0:00:02.00", 1, "Default-furigana", "fx", "@な"],
  [17, "0:00:02.00", "0:00:03.00", 1, "Default", "fx", "@拼"],
];

const Piped = ({ text, by, c }: { text: string; by: number; c?: string }) => (
  <>{text.split("|").map((part, i) => (
    <React.Fragment key={i}>{i > 0 && <Pipe $by={by} $c={c}>|</Pipe>}{part}</React.Fragment>
  ))}</>
);

const GridText = ({ text }: { text: string }) => (
  <>{text.split("@").map((part, i) => (
    <React.Fragment key={i}>{i > 0 && <Ring>◎</Ring>}<Piped text={part} by={1} c="#5c5c28" /></React.Fragment>
  ))}</>
);

const ticks = Array.from({ length: 68 }, (_, i) => ({ x: Math.round(76 - 65 + i * 16.25) - 0.5, major: i >= 4 && (i - 4) % 10 === 0 }));
const seconds = ["0:00:04", "05", "06", "07", "08", "09", "10"];

const timeFields: [number, number, string][] = [
  [78, 5, "0:00:04.00"], [78, -1, "0:00:09.83"], [78, 4, "0:00:05.83"], [40, 4, "0"], [41, -1, "0"], [41, -1, "0"],
];

/* ---------- page ---------- */

export default function App() {
  return (
    <Window>
      <Global />
      <Defs />
      <TitleBar>
        <svg width="16" height="16" viewBox="0 0 16 16">
          <circle cx="8" cy="8" r="7.500" fill="#3a1020" /><path d="M2 4L5 1L6 4L10 4L12 1L14 4L15 9L13 13L8 15L3 13L1 9Z" fill="#a81c28" />
          <circle cx="8" cy="8.500" r="4.500" fill="#200810" /><circle cx="8" cy="8.500" r="1.800" fill="#e8d8d8" /><path d="M2 3L4 5M12 5L14 3M3 13L5 11M13 13L11 11" stroke="#5878b8" />
        </svg>
        <Title>blank_video.ass - Aegisub 9157-dev-7e3a0fb92</Title>
        <WindowButtons>
          <svg viewBox="0 0 46 22"><path d="M18 11.500H28" stroke="#fff" /></svg>
          <svg viewBox="0 0 46 22"><path d="M18.500 8.500h7v7h-7zM20.500 8V6.500h7v7H26" fill="none" stroke="#fff" /></svg>
          <svg viewBox="0 0 46 22"><path d="M18 5.500L28 15.500M28 5.500L18 15.500" stroke="#fff" strokeWidth="1.100" /></svg>
        </WindowButtons>
      </TitleBar>
      <MenuBar>
        {menus.map(([m, k]) => <span key={k}>{m}(<Key>{k}</Key>)</span>)}
      </MenuBar>
      <Toolbar>
        {mainIcons.map((icon, i) => (icon ? <ToolButton key={i} $first={i === 0}>{icon}</ToolButton> : <Separator key={i} />))}
      </Toolbar>

      <Main>
        <VideoSide>
          <VideoRow>
            <VisualTools>
              {visualIcons.map((icon, i) => (icon ? <VisualButton key={i} $on={i === 0}>{icon}</VisualButton> : <VisualRule key={i} />))}
            </VisualTools>
            <Video>
              <Lyric $ruby>
                <RubyPair><Glyph $ruby $sung>ま</Glyph><Glyph $ruby>わ</Glyph></RubyPair>
                <span />
                <RubyPair><Glyph $ruby>そ</Glyph><Glyph $ruby>ら</Glyph></RubyPair>
              </Lyric>
              <Lyric>
                {Array.from("回る空うさぎ").map((c, i) => <Glyph key={c} $sung={i === 0}>{c}</Glyph>)}
              </Lyric>
            </Video>
          </VideoRow>
          <SeekArea>
            <svg width="728" height="14" viewBox="0 0 728 14">
              <path d="M0 .5H727" stroke="#a0a0a0" /><path d="M4.500 3V9.500H723M347.500 3V9M690.500 3V9" fill="none" stroke="#6a6a6a" /><path d="M5 5.500H723.500V9" fill="none" stroke="#e2e2e2" />
              <rect x="275" y="5" width="7" height="6" fill="#2c5c54" stroke="#0c1c18" strokeWidth=".8" />
            </svg>
          </SeekArea>
          <VideoControls>
            <VideoButton $w={39}><svg viewBox="0 0 32 32"><Tri x={11} h={7.5} /></svg></VideoButton>
            <VideoButton $w={39}><svg viewBox="0 0 32 32"><g transform="translate(-3 -.5)"><BrL x={3.5} c={red} /><Tri x={13.5} y={16.5} h={8} /><BrR x={26} c={red} /></g></svg></VideoButton>
            <VideoButton $w={39}><svg viewBox="0 0 32 32"><path d="M7 8.500h6v15H7zM16 8.500h6v15h-6z" /></svg></VideoButton>
            <VideoButton $w={45}><svg viewBox="0 0 32 32"><g transform="translate(0 1)"><Pane x={4.5} y={2.5} arrow /><Auto x={1.5} y={29} /></g></svg></VideoButton>
            <ReadOnly $w={232}>0:00:04.000 - 100</ReadOnly>
            <ReadOnly $w={232}>+0ms; -5830ms</ReadOnly>
            <Zoom $w={72}>87.5%<Chevron /></Zoom>
          </VideoControls>
        </VideoSide>

        <Panels>
          <AudioPanel>
            <DisplayRow>
              <AudioDisplay>
                <Ruler>
                  <svg width="1101" height="35" viewBox="0 0 1101 35">
                    <path d={ticks.map((t) => `M${t.x} ${t.major ? 29 : 31}V35`).join("") + "M0 34.500H1101"} stroke="#5b93dc" />
                    {seconds.map((s, i) => <text key={s} x={76 + i * 162.5} y="13" fontFamily="Open Sans" fontSize="12" fill="#5b93dc">{s}</text>)}
                  </svg>
                </Ruler>
                <Track>
                  {syllables.map((s, i) => (
                    <Syllable key={i} $w={s.w} $active={i === 0} $last={i === syllables.length - 1}><Piped text={s.t} by={1} /></Syllable>
                  ))}
                  <Marker $x={75} $w={2} $c="#d80404" />
                  <Marker $x={235} $c="#c428c4" />
                  <Marker $x={1047} $c="#b020b0" />
                  <Feet width="1101" height="325"><path d="M76 0h6l-6 6zM76 325h6l-6 -6z" fill="#d80404" /><path d="M1022 0h-6l6 6zM1022 325h-6l6 -6z" fill="#0202c8" /></Feet>
                </Track>
                <AudioScroll />
              </AudioDisplay>
              <Sliders>
                <Slider $h={360} $top={179} />
                <Slider $h={350} $top={170} />
                <Slider $h={350} $top={170} $off />
                <LinkToggle />
              </Sliders>
            </DisplayRow>
            <AudioToolbar>
              {audioIcons.map((icon, i) => (icon ? <ToolButton key={i} $on={audioOn.has(i)}>{icon}</ToolButton> : <Separator key={i} />))}
            </AudioToolbar>
            <KaraokeStrip>
              <StripButton><svg width="38" height="20"><path d="M5 6h28M5 14h28M19 0v20" stroke="#9cb89c" strokeWidth="4" opacity=".5" /><path d="M10 1L28 19M28 1L10 19" stroke="#f88080" strokeWidth="5" /></svg></StripButton>
              <StripButton><svg width="38" height="20"><path d="M5 6h28M5 14h28M19 0v20" stroke="#9cb89c" strokeWidth="4" opacity=".5" /><path d="M8 11L14 17L29 1" stroke="#50a050" strokeWidth="5" fill="none" /><path d="M8 11L14 17L29 1" stroke="#98f098" strokeWidth="3" fill="none" /></svg></StripButton>
              <StripGap />
              {syllables.map((s, i) => (
                <StripSyllable key={i} $last={i === syllables.length - 1}>{Array.from(s.t).map((c, j) => <Ch key={j} $latin={c < "~"}>{c}</Ch>)}</StripSyllable>
              ))}
            </KaraokeStrip>
          </AudioPanel>

          <EditPanel>
            <EditRow $h={26}>
              <Check $w={56}><Box on /><span>注释(<Key>C</Key>)</span></Check>
              <Field $w={281} $l={13} $bg="#e1e1e1">Karaoke<Chevron /></Field>
              <Plain>编辑</Plain>
              <Field $w={281} $l={11} $mute>说话人<Chevron /></Field>
              <Field $w={437} $l={10}>karaoke<Chevron /></Field>
              <Field $w={34} $l={-1} $pad={9}>16</Field>
            </EditRow>
            <EditRow $h={44}>
              <Spin $w={40} $l={0}>
                0
                <svg width="16" height="36"><path d="M.5.500h14v17H.5zM.5 19.500h14v16H.5z" fill="#f0f0f0" stroke="#adadad" /><path d="M4.500 11h6l-3-4zM4.500 25.500h6l-3 4z" /></svg>
              </Spin>
              {timeFields.map(([w, l, t], i) => <TimeBox key={i} $w={w} $l={l}>{t}</TimeBox>)}
              <StyleButton $l={6}><Heavy $fw={900}>B</Heavy></StyleButton>
              <StyleButton><Letter $serif $it $fw={400}>I</Letter></StyleButton>
              <StyleButton><Letter $deco="underline">U</Letter></StyleButton>
              <StyleButton><Letter $deco="line-through"> S </Letter></StyleButton>
              <StyleButton><Letter $it $fw={900}>fn</Letter></StyleButton>
              <StyleButton $l={7}><Letter $c="#e01010">A</Letter><Letter>B</Letter></StyleButton>
              <StyleButton><Letter>A</Letter><Letter $c="#e01010">B</Letter></StyleButton>
              <StyleButton><Letter $glow>AB</Letter></StyleButton>
              <StyleButton><Shadowed>AB</Shadowed></StyleButton>
              <StyleButton $l={7}><svg viewBox="0 0 36 36"><Tick x={5} y={5} /></svg></StyleButton>
              <Check $l={11} $w={52}><Radio on /><span>时间(<Key>I</Key>)</span></Check>
              <Check $l={17} $w={45}><Radio /><span>帧(<Key>R</Key>)</span></Check>
              <Check $l={18}><Box />显示原始字幕</Check>
            </EditRow>
            <TextArea>
              {syllables.map((s, i) => (
                <React.Fragment key={i}>
                  <Tok $k="brace">{"{"}</Tok><Tok $k="slash">\</Tok><Tok $k="tag">k</Tok><Tok $k="num">{s.k}</Tok><Tok $k="brace">{"}"}</Tok><Tok $k="txt"><Piped text={s.t} by={2.1} c="#444420" /></Tok>
                </React.Fragment>
              ))}
            </TextArea>
          </EditPanel>
        </Panels>
      </Main>

      <GridArea>
        <Table>
          <Row $bg="#a4cee7" $head>
            <Cell $center>#</Cell><Cell $center $time>开始时间</Cell><Cell $center $time>结束时间</Cell><Cell $center>字/秒</Cell><Cell>样式</Cell><Cell>特效</Cell><Cell>文本</Cell>
          </Row>
          {lines.map(([n, a, b, rate, style, fx, text]) => (
            <Row key={n} $bg={n === 9 ? "#d3eeee" : n < 9 ? "#d8def6" : "#fff"} $current={n === 9}>
              <Cell $center $bg="#c4ecc9">{n}</Cell>
              <Cell $center $time>{a}</Cell>
              <Cell $center $time>{b}</Cell>
              <Cell $center><Rate $hot={n === 8}>{rate}</Rate></Cell>
              <Cell>{style}</Cell>
              <Cell>{fx}</Cell>
              <TextCell $tight={n === 7}><GridText text={text} /></TextCell>
            </Row>
          ))}
        </Table>
        <Scrollbar>
          <svg width="33" height="20"><path d="M12 11.500L16 7.500L20 11.500" fill="none" stroke="#444" strokeWidth="1.500" /></svg>
          <Thumb />
          <svg width="33" height="20"><path d="M12 8L16 12L20 8" fill="none" stroke="#444" strokeWidth="1.500" /></svg>
        </Scrollbar>
      </GridArea>
      <StatusBar />
    </Window>
  );
}
